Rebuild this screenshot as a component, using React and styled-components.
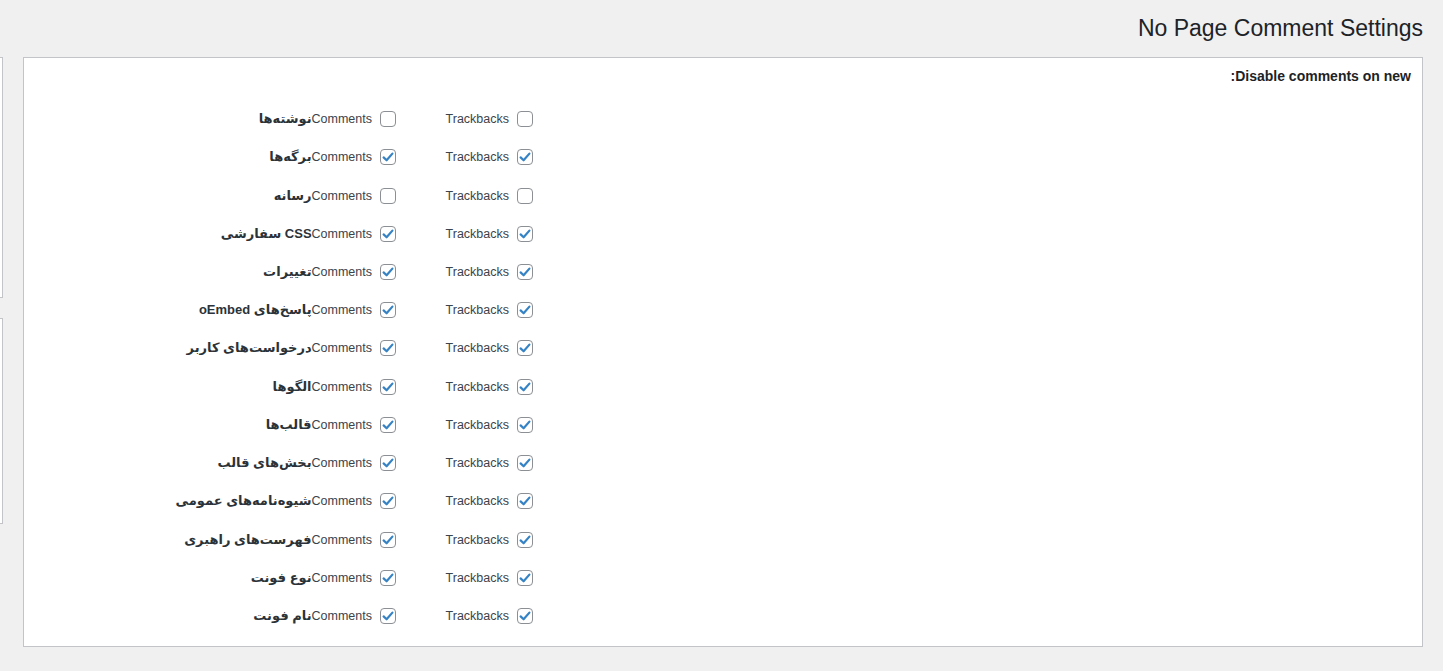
import React from 'react';
import styled, { createGlobalStyle } from 'styled-components';

const GlobalStyle = createGlobalStyle`
	html, body {
		margin: 0;
		padding: 0;
		background: #f0f0f1;
	}
	body {
		font-family: "Liberation Sans", Arial, "DejaVu Sans", sans-serif;
		color: #3c434a;
		font-size: 13px;
	}
`;

const postTypes = [
	{ name: 'نوشته‌ها', checked: false },
	{ name: 'برگه‌ها', checked: true },
	{ name: 'رسانه', checked: false },
	{ name: 'CSS سفارشی', checked: true },
	{ name: 'تغییرات', checked: true },
	{ name: 'پاسخ‌های oEmbed', checked: true },
	{ name: 'درخواست‌های کاربر', checked: true },
	{ name: 'الگوها', checked: true },
	{ name: 'قالب‌ها', checked: true },
	{ name: 'بخش‌های قالب', checked: true },
	{ name: 'شیوه‌نامه‌های عمومی', checked: true },
	{ name: 'فهرست‌های راهبری', checked: true },
	{ name: 'نوع فونت', checked: true },
	{ name: 'نام فونت', checked: true },
];

function Checkbox({ checked }) {
	return (
		<Box16>
			{checked && (
				<svg width="14" height="14" viewBox="0 0 14 14">
					<polyline
						points="2.6,7.4 5.6,10.3 11.4,3.6"
						fill="none"
						stroke="#3582c4"
						strokeWidth="2.2"
						strokeLinecap="round"
						strokeLinejoin="round"
					/>
				</svg>
			)}
		</Box16>
	);
}

function App() {
	return (
		<>
			<GlobalStyle />
			<Wrap>
				<Title>No Page Comment Settings</Title>
				<Columns>
					<Main>
						<Heading>Disable comments on new:</Heading>
						<Rows>
							{postTypes.map((pt) => (
								<Row key={pt.name}>
									<Spacer />
									<Option>
										<Checkbox checked={pt.checked} />
										<Label>Trackbacks</Label>
									</Option>
									<Option>
										<Checkbox checked={pt.checked} />
										<Label>
											Comments<Name>{pt.name}</Name>
										</Label>
									</Option>
								</Row>
							))}
						</Rows>
					</Main>
					<Side>
						<SideBox h={241} />
						<SideBox h={206} />
					</Side>
				</Columns>
			</Wrap>
		</>
	);
}

export default App;

const Wrap = styled.div`
	direction: rtl;
	padding: 13px 20px 0 0;
	height: 671px;
	box-sizing: border-box;
	overflow: hidden;
`;

const Title = styled.h1`
	margin: 0 0 14px;
	font-family: "Liberation Sans", Arial, sans-serif;
	font-size: 23px;
	font-weight: 400;
	line-height: 30px;
	color: #1d2327;
`;

const Columns = styled.div`
	display: flex;
	gap: 20px;
	align-items: flex-start;
`;

const Main = styled.div`
	flex: 1;
	background: #fff;
	border: 1px solid #c3c4c7;
	padding: 9px 11px 11px;
`;

const Heading = styled.div`
	font-weight: 700;
	font-size: 14px;
	line-height: 18px;
	color: #1d2327;
	margin-bottom: 15px;
`;

const Rows = styled.div`
	display: flex;
	flex-direction: column;
`;

const Row = styled.div`
	display: grid;
	grid-template-columns: 878px 137px 1fr;
	align-items: center;
	height: 38.23px;
`;

const Spacer = styled.div``;

const Option = styled.label`
	display: flex;
	align-items: center;
	gap: 8px;
	white-space: nowrap;
`;

const Box16 = styled.span`
	width: 16px;
	height: 16px;
	box-sizing: border-box;
	border: 1px solid #8c8f94;
	border-radius: 4px;
	background: #fff;
	display: flex;
	align-items: center;
	justify-content: center;
	flex-shrink: 0;
`;

const Label = styled.span`
	font-size: 12.5px;
	line-height: 18px;
	color: #3c434a;
`;

const Name = styled.bdi`
	unicode-bidi: isolate;
	direction: rtl;
	font-size: 13px;
	font-weight: 700;
	color: #2c3338;
`;

const Side = styled.div`
	width: 3px;
	display: flex;
	flex-direction: column;
	gap: 20px;
`;

const SideBox = styled.div`
	height: ${(props) => props.h}px;
	background: #fff;
	border: 1px solid #c3c4c7;
	border-left: none;
	box-sizing: border-box;
`;
